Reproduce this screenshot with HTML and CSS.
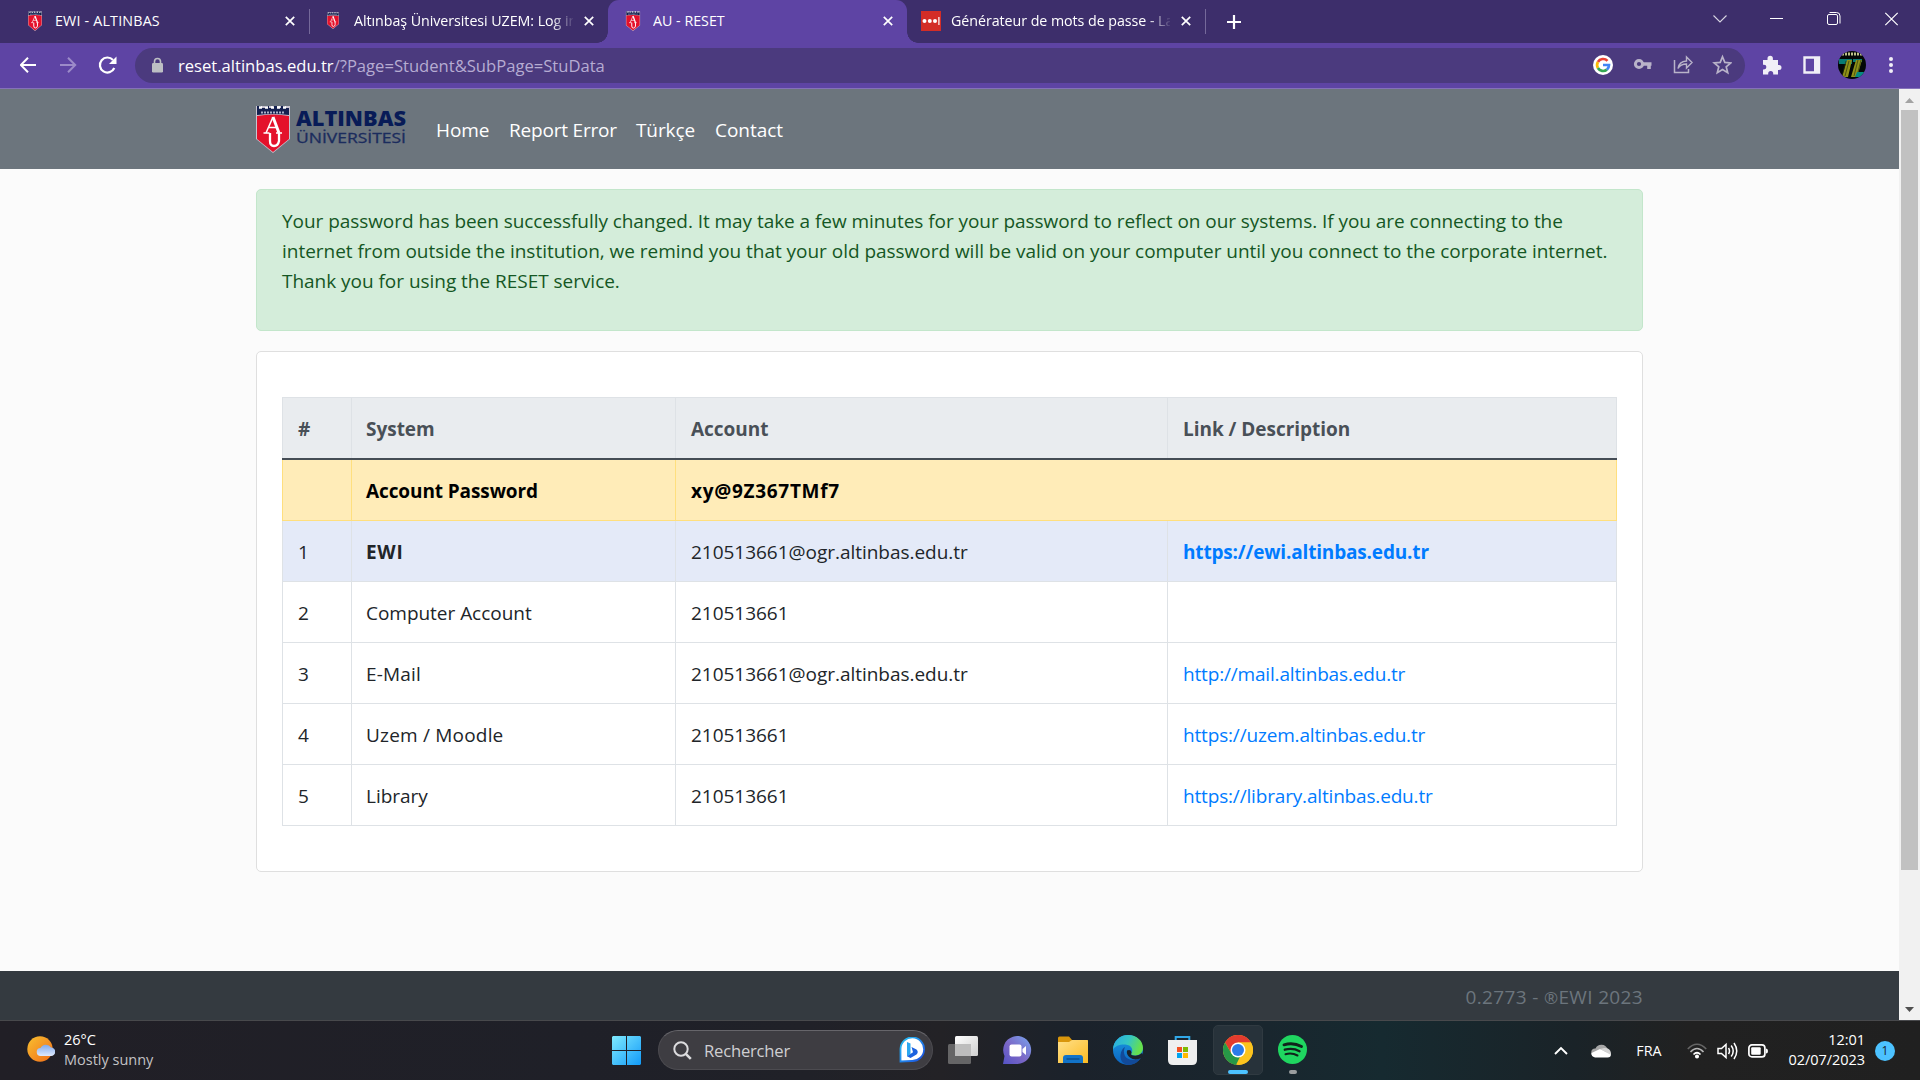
FILE: index.html
```html
<!DOCTYPE html>
<html lang="en">
<head>
<meta charset="utf-8">
<title>AU - RESET</title>
<link rel="stylesheet" href="styles.css">
</head>
<body>
<svg class="defs" width="0" height="0">
  <defs>
    <symbol id="shield" viewBox="0 0 34 48">
      <path d="M0 1h34v33L17 48 0 34z" fill="#c9c4d0"/>
      <path d="M1 11q16-3 32 0v23L17 47 1 34z" fill="#e4112b"/>
      <path d="M1 1h4v2h4V1h4v2h4V1h4v2h4V1h4v2h4V10q-16-2-32 0z" fill="#14204f"/>
      <path d="M3 2.500h3m3 0h3m3 0h3m3 0h3m3 0h3" stroke="#fff" stroke-width="2.500"/>
      <path d="M5 7.500h24" stroke="#aab0c8" stroke-width="2" stroke-dasharray="2 1"/>
      <g stroke="#fff" fill="none"><path d="M10 28l7-16" stroke-width="1.500"/><path d="M17 12l6 16" stroke-width="3"/><path d="M12.500 22.500h8M7.500 28h6m6.500 0h6" stroke-width="1.500"/><path d="M14 28v8q0 5 4 5t5-5v-8" stroke-width="2.300"/></g>
    </symbol>
    <symbol id="close" viewBox="0 0 10 10"><path d="M.8.8l8.400 8.400M9.200.8L.8 9.200" stroke="#fff" stroke-width="1.700"/></symbol>
    <linearGradient id="gWin" x1="0" y1="0" x2="1" y2="1"><stop offset="0" stop-color="#7feafe"/><stop offset="1" stop-color="#129af8"/></linearGradient>
    <linearGradient id="gSun" x1="0" y1="0" x2="1" y2="1"><stop offset="0" stop-color="#f8c030"/><stop offset="1" stop-color="#f06c18"/></linearGradient>
    <linearGradient id="gCloud" x1="0" y1="0" x2="0" y2="1"><stop offset="0" stop-color="#7fa9ec"/><stop offset="1" stop-color="#dfe9fc"/></linearGradient>
    <linearGradient id="gChat" x1="0" y1="1" x2="1" y2="0"><stop offset="0" stop-color="#5453c6"/><stop offset=".45" stop-color="#7b67c6"/><stop offset="1" stop-color="#78a6ef"/></linearGradient>
    <linearGradient id="gFold" x1="0" y1="0" x2="1" y2="1"><stop offset="0" stop-color="#ffe08a"/><stop offset="1" stop-color="#fcbb22"/></linearGradient>
    <linearGradient id="gEdgeA" x1="0" y1="0" x2="1" y2=".3"><stop offset="0" stop-color="#27a9e6"/><stop offset=".55" stop-color="#35c6c3"/><stop offset="1" stop-color="#66e04c"/></linearGradient>
    <linearGradient id="gEdgeB" x1="0" y1="0" x2="0" y2="1"><stop offset="0" stop-color="#1a9be2"/><stop offset="1" stop-color="#0b63c0"/></linearGradient>
    <linearGradient id="gBing" x1="0" y1="0" x2="1" y2="1"><stop offset="0" stop-color="#27c4f3"/><stop offset="1" stop-color="#1b4ae0"/></linearGradient>
    <linearGradient id="gTask" x1="0" y1="0" x2="1" y2="1"><stop offset="0" stop-color="#fff"/><stop offset="1" stop-color="#cfcfcf"/></linearGradient>
  </defs>
</svg>

<div class="screen">
  <header class="tabstrip">
    <div class="tab tab-1">
      <svg class="fav" width="14" height="20"><use href="#shield"/></svg>
      <span class="title t-ewi">EWI - ALTINBAS</span>
      <svg class="x" width="10" height="10"><use href="#close"/></svg>
    </div>
    <i class="tab-line"></i>
    <div class="tab tab-2">
      <svg class="fav" width="12" height="17"><use href="#shield"/></svg>
      <span class="title fade">Altınbaş Üniversitesi UZEM: Log in</span>
      <svg class="x" width="10" height="10"><use href="#close"/></svg>
    </div>
    <div class="tab tab-3">
      <svg class="fav" width="16" height="20"><use href="#shield"/></svg>
      <span class="title">AU - RESET</span>
      <svg class="x" width="10" height="10"><use href="#close"/></svg>
    </div>
    <div class="tab tab-4">
      <svg class="fav" width="20" height="20"><path fill="#d32d27" d="M0 0h20v20H0z"/><g fill="#fff"><circle cx="3.500" cy="10" r="2"/><circle cx="8.800" cy="10" r="2"/><circle cx="14" cy="10" r="2"/><path d="M17.300 6h1.200v8h-1.200z"/></g></svg>
      <span class="title fade">Générateur de mots de passe - La</span>
      <svg class="x" width="10" height="10"><use href="#close"/></svg>
    </div>
    <i class="tab-line"></i>
    <svg class="plus" width="14" height="14"><path d="M7 0v14M0 7h14" stroke="#fff" stroke-width="2.200"/></svg>
    <svg class="wincontrols" width="186" height="14" fill="none" stroke="#fff">
      <path d="M.5 3.500L7 10l6.500-6.500" stroke="#d8d5e2" stroke-width="1.100"/><path d="M57 6.500h13"/>
      <rect x="114.500" y="2.500" width="10" height="10" rx="1.500"/><path d="M116.500.500h7q3.500 0 3.500 3.500v7.500"/>
      <path d="M172.300.800l12.400 12.400M184.700.800L172.300 13.200" stroke-width="1.200"/>
    </svg>
  </header>

  <div class="toolbar">
    <svg class="nav-icons" width="98" height="20" fill="none" stroke="#fff" stroke-width="2">
      <path d="M16 10H1M8 2.800L.8 10 8 17.200"/>
      <path d="M40 10h15M48 2.800l7.200 7.200-7.200 7.200" stroke="#9c8bc9"/>
      <path d="M94.300 13A7.500 7.500 0 1 1 93 5" stroke-width="2.200"/><path d="M96.500 1.500V9H89z" fill="#fff" stroke="none"/>
    </svg>
    <div class="omnibox">
      <svg width="11" height="16"><path d="M2.500 7V4.500a3 3 0 0 1 6 0V7" fill="none" stroke="#bdbfc4" stroke-width="1.600"/><rect y="6" width="11" height="9.500" rx="1.200" fill="#bdbfc4"/></svg>
      <span class="url">reset.altinbas.edu.tr<span class="path">/?Page=Student&amp;SubPage=StuData</span></span>
      <svg class="omni-icons" width="140" height="22">
        <circle cx="11" cy="11" r="10" fill="#fff"/>
        <g fill="none" stroke-width="2.700"><path d="M15.500 6.900A6 6 0 0 0 5.900 8" stroke="#ea4335"/><path d="M5.900 8a6 6 0 0 0 0 6" stroke="#fbbc05"/><path d="M5.900 14a6 6 0 0 0 9 1.600" stroke="#34a853"/><path d="M14.900 15.600A6 6 0 0 0 17 11h-6" stroke="#4285f4"/></g>
        <g fill="none" stroke="#b9b3c9"><circle cx="47" cy="10" r="3.600" stroke-width="3"/><path d="M50 10h9.500M57 10v5" stroke-width="3.600"/>
          <path d="M82.500 6v12.500h14V15" stroke-width="1.500"/><path d="M86 14.500q1-7 8.500-7.500V3l5.500 5.500-5.500 5.500v-4q-6 0-8.500 4.500z" stroke-width="1.400"/>
          <path d="M130.500 2.800l2.300 5.600 6 .5-4.600 3.900 1.500 5.900-5.200-3.200-5.200 3.200 1.500-5.900-4.600-3.900 6-.5z" stroke-width="1.700"/></g>
      </svg>
    </div>
    <svg class="ext-icons" width="136" height="30">
      <path d="M0 11.500h4.500V10a2.700 2.700 0 0 1 5.400 0v1.500H15v5h1a2.500 2.500 0 0 1 0 5h-1V26h-4.800v-1a2.500 2.500 0 0 0-5 0v1H0v-5h1a2.400 2.400 0 0 0 0-4.800H0z" fill="#f1eff7" transform="translate(0 -1.500)"/>
      <path d="M41.500 7.500h14.500v15H41.500z" fill="none" stroke="#f1eff7" stroke-width="2.400"/><path d="M51 7h6v16h-6z" fill="#f1eff7"/>
      <clipPath id="ava"><circle cx="89" cy="15" r="14"/></clipPath>
      <g clip-path="url(#ava)"><path d="M74 0h30v30H74z" fill="#030806"/><path d="M79 4h20" stroke="#bdc18a" stroke-width="3" stroke-dasharray="2 1"/><path d="M76 9h13v5H76zM90 9h9v3h-9z" fill="#087c74"/><path d="M84 10h5l-4 17h-6zM93 10h6l-5 17h-6z" fill="#8f9118"/><path d="M83 11l-4 15M86 11l-4 15M95 10l-4 16M98 10l-4 16" stroke="#222b0b" stroke-width=".6"/><path d="M94 22h10l-2 5H92z" fill="#078a80"/></g>
      <g fill="#f1eff7"><circle cx="128" cy="9" r="2"/><circle cx="128" cy="15" r="2"/><circle cx="128" cy="21" r="2"/></g>
    </svg>
  </div>

  <div class="viewport">
    <main class="page">
      <nav class="navbar">
        <div class="container nav-row">
          <svg class="brand" width="152" height="48">
            <use href="#shield" width="34" height="48"/>
            <text class="b1" x="40" y="21" textLength="110" lengthAdjust="spacingAndGlyphs">ALTINBAS</text>
            <text class="b2" x="40" y="37.500" textLength="110" lengthAdjust="spacingAndGlyphs">ÜNİVERSİTESİ</text>
          </svg>
          <a class="n1">Home</a><a class="n2">Report Error</a><a class="n3">Türkçe</a><a class="n4">Contact</a>
        </div>
      </nav>
      <div class="container">
        <div class="alert"><span class="first">Your password has been successfully changed. It may take a few minutes for your password to reflect on our systems. If you are connecting to the</span><br>internet from outside the institution, we remind you that your old password will be valid on your computer until you connect to the corporate internet.<br>Thank you for using the RESET service.</div>
        <div class="card">
          <table>
            <colgroup><col class="c1"><col class="c2"><col class="c3"><col></colgroup>
            <thead><tr><th>#</th><th>System</th><th>Account</th><th>Link / Description</th></tr></thead>
            <tbody>
              <tr class="warn"><td></td><td>Account Password</td><td colspan="2" class="pw">xy@9Z367TMf7</td></tr>
              <tr class="info"><td>1</td><td><b class="ewi">EWI</b></td><td>210513661@ogr.altinbas.edu.tr</td><td><a><b>https://ewi.altinbas.edu.tr</b></a></td></tr>
              <tr><td>2</td><td>Computer Account</td><td>210513661</td><td></td></tr>
              <tr><td>3</td><td class="wide">E-Mail</td><td>210513661@ogr.altinbas.edu.tr</td><td><a>http://mail.altinbas.edu.tr</a></td></tr>
              <tr><td>4</td><td class="wide">Uzem / Moodle</td><td>210513661</td><td><a>https://uzem.altinbas.edu.tr</a></td></tr>
              <tr><td>5</td><td>Library</td><td>210513661</td><td><a>https://library.altinbas.edu.tr</a></td></tr>
            </tbody>
          </table>
        </div>
      </div>
      <footer class="footer"><div class="container">0.2773 - <span class="reg">®</span>EWI 2023</div></footer>
    </main>
    <div class="scrollbar">
      <svg width="9" height="5"><path d="M0 5L4.500 0 9 5z" fill="#a3a3a3"/></svg>
      <i class="thumb"></i>
      <svg width="9" height="5"><path d="M0 0l4.500 5L9 0z" fill="#505050"/></svg>
    </div>
  </div>

  <footer class="taskbar">
    <div class="weather">
      <svg width="28" height="26"><circle cx="13" cy="13" r="12.700" fill="url(#gSun)"/><path d="M14 20.500a4 4 0 0 1-.5-8 6 6 0 0 1 10.500-.500 4.200 4.200 0 0 1 0 8.500z" transform="translate(0 -.5)" fill="url(#gCloud)"/></svg>
      <div class="w-text"><span>26°C</span><span class="dim">Mostly sunny</span></div>
    </div>
    <div class="apps">
      <svg class="win" width="29" height="29"><path d="M1 0h13v14H0V1zM15 0h13l1 1v13H15zM0 15h14v14H1l-1-1zM15 15h14v13l-1 1H15z" fill="url(#gWin)"/></svg>
      <div class="search">
        <svg width="19" height="19" fill="none" stroke="#dcdcde"><circle cx="8" cy="8" r="6.700" stroke-width="2"/><path d="M12.800 12.800l5 5" stroke-width="2.600"/></svg>
        <span>Rechercher</span>
        <svg width="26" height="26"><path d="M1.500 24.500V12A11.800 11.800 0 1 1 13 24z" fill="#fff" stroke="url(#gBing)" stroke-width="1.800"/><path d="M8 5l3.500 1.500V17L8 19.500z" fill="#2aa7f0"/><path d="M12.500 10l5 2.500q2.500 2.500 0 5L11.500 21 8 19.200l6-3.900z" fill="#1c62df"/></svg>
      </div>
      <svg class="app a-task" width="30" height="28"><rect x="7" width="23" height="20" rx="1.500" fill="url(#gTask)"/><rect y="8" width="23" height="20" rx="1.500" fill="#777" opacity=".8"/><rect x="7" y="8" width="16" height="12" fill="#bdbdbd"/></svg>
      <svg class="app a-chat" width="29" height="29"><path d="M0 28l1.500-8A14 14 0 1 1 14.500 28z" fill="url(#gChat)"/><rect x="6.500" y="8.500" width="12" height="12" rx="2" fill="#fff"/><path d="M19.500 13l3.500-3v9l-3.500-3z" fill="#fff"/></svg>
      <svg class="app a-fold" width="30" height="28"><path d="M0 7V2q0-1.500 1.500-1.500H11L14 4h15q1 0 1 1v8H0z" fill="#d9960c"/><path d="M0 6h11l3-2h15q1 0 1 1v22H0z" fill="url(#gFold)"/><path d="M5 27v-5q0-3 3-3h14q3 0 3 3v5z" fill="#1273c8"/><path d="M8.500 23h13" stroke="#0b4f91" stroke-width="1.500"/></svg>
      <svg class="app a-edge" width="30" height="30"><circle cx="15" cy="15" r="15" fill="url(#gEdgeB)"/><path d="M0 15C0 6 7 0 15 0c9 0 15 6 15 13 0 5-4 7.500-8 7.500-3 0-4.500-1-3.500-2.500 2-3 0-8-6-8.500C7 9.200 1.500 11 0 15z" fill="url(#gEdgeA)"/><path d="M12 12c-3 6 0 14 10 13 3-.3 5-1.800 6-2.500-3 5-8 7.500-13 7.500C9 29 7 24 7.500 20 8 15.500 10 13 12 12z" fill="#124a99"/><path d="M18.500 18q-1.500 2 2 2.500 5 .7 8.500-2.500l1 2-1.500 3q-7 3-11.500-.500-4-3-3-7 4-1.500 4.500 2z" fill="#1b222a"/></svg>
      <svg class="app a-store" width="29" height="29"><path d="M7.700 6V1h13.600v5" fill="none" stroke="#31a8e8" stroke-width="2"/><path d="M0 4h29v20q0 5-5 5H5q-5 0-5-5z" fill="#efefef"/><path d="M9 11h5v5H9z" fill="#f25022"/><path d="M15 11h5v5h-5z" fill="#7fba00"/><path d="M9 17h5v5H9z" fill="#00a4ef"/><path d="M15 17h5v5h-5z" fill="#ffb900"/></svg>
      <div class="app a-chrome">
        <svg width="30" height="30"><circle cx="15" cy="15" r="15" fill="#fcc31e"/><path d="M2 7.500A15 15 0 0 1 28 7.500H15l-6.500 11z" fill="#e33b2e"/><path d="M2 7.500l6.500 11.200 8.500 3-4 8.200A15 15 0 0 1 2 7.500z" fill="#279847"/><path d="M15 7.500h13a15 15 0 0 1-13 22.500l6.500-11.300z" fill="#fcc31e"/><circle cx="15" cy="15" r="7.500" fill="#fff"/><circle cx="15" cy="15" r="6" fill="#2c7bea"/></svg>
        <i class="run"></i>
      </div>
      <div class="app a-spot">
        <svg width="29" height="29"><circle cx="14.500" cy="14.500" r="14.500" fill="#1fd660"/><g fill="none" stroke="#10231b" stroke-linecap="round"><path d="M6 9.800q9.500-2.600 17.500 1.700" stroke-width="2.900"/><path d="M6.800 14.700q8-2.200 14.700 1.500" stroke-width="2.400"/><path d="M7.500 19.200q6.500-1.700 12 1.300" stroke-width="2"/></g></svg>
        <i class="run idle"></i>
      </div>
    </div>
    <div class="tray">
      <svg class="t-chev" width="14" height="9"><path d="M1 8l6-6 6 6" fill="none" stroke="#fff" stroke-width="1.900"/></svg>
      <svg class="t-cloud" width="20" height="14"><path d="M4 12.500a4 4 0 0 1 .5-8A6.500 6.500 0 0 1 16.500 5z" fill="#a7a7a7"/><path d="M4 13.500q-4-1-3.500-4.500L9 5l11 5q0 3.500-3.500 3.500z" fill="#fff"/><path d="M9 5l4-1q6-.5 7 5v2z" fill="#d3d3d3"/></svg>
      <span class="t-fra">FRA</span>
      <svg class="t-wifi" width="20" height="16" fill="none" stroke="#fff" stroke-width="1.700"><path d="M.8 6q9.200-9.500 18.400 0" stroke="#666"/><path d="M3.500 9q6.500-7 13 0" stroke="#b5b5b5"/><path d="M6.500 11.500q3.500-3.500 7 0"/><circle cx="10" cy="13.500" r="1.200" fill="#fff"/></svg>
      <svg class="t-vol" width="21" height="18" fill="none" stroke="#fff" stroke-width="1.500"><path d="M1 6.500h3.500L9 2.500v13l-4.500-4H1z"/><path d="M11.500 6q2 3 0 6M14.200 3.500q4 5.500 0 11M17 1q5.500 8 0 16"/></svg>
      <svg class="t-bat" width="21" height="14"><rect x=".9" y=".9" width="16" height="12" rx="3" fill="none" stroke="#fff" stroke-width="1.700"/><rect x="3.200" y="3.200" width="9.500" height="7.500" rx="1" fill="#fff"/><path d="M18 4.500q2 0 2 2.500t-2 2.500z" fill="#fff"/></svg>
      <div class="clock"><span>12:01</span><span>02/07/2023</span></div>
      <span class="badge">1</span>
    </div>
  </footer>
</div>
</body>
</html>
```
FILE: styles.css
```css
* { box-sizing: border-box; }
body { margin: 0; width: 1920px; height: 1080px; overflow: hidden; font-family: "Open Sans", "Noto Sans", sans-serif; }
svg { flex: none; display: block; }
.defs { position: absolute; }
.screen { display: flex; flex-direction: column; width: 1920px; height: 1080px; }

/* Browser tabs */
.tabstrip { display: flex; align-items: center; height: 43px; flex: none; background: #3d2e6b; color: #fff; }
.tab { display: flex; align-items: center; height: 43px; font-size: 14.25px; white-space: nowrap; padding-bottom: 2px; }
.title { flex: 1; overflow: hidden; line-height: 24px; }
.t-ewi { letter-spacing: .2px; }
.tab-1 { width: 309px; padding-left: 28px; padding-right: 14px; }
.tab-1 .fav { margin-right: 13px; }
.tab-2 { width: 298px; padding-left: 17px; padding-right: 14px; }
.tab-2 .fav { margin-right: 15px; }
.tab-2 .title { margin-right: 11px; letter-spacing: -.05px; }
.tab-4 .title { margin-right: 11px; letter-spacing: -.05px; }
.tab-3 { width: 299px; padding-left: 17px; padding-right: 14px; background: #5e44a4; border-radius: 11px 11px 0 0; position: relative; }
.tab-3 .fav { margin-right: 12px; }
.tab-3::before, .tab-3::after { content: ""; position: absolute; bottom: 0; width: 11px; height: 11px; }
.tab-3::before { left: -11px; background: radial-gradient(circle at 0 0, transparent 10.500px, #5e44a4 11px); }
.tab-3::after { right: -11px; background: radial-gradient(circle at 100% 0, transparent 10.500px, #5e44a4 11px); }
.tab-4 { width: 298px; padding-left: 14px; padding-right: 14px; }
.tab-4 .fav { margin-right: 10px; }
.fade { -webkit-mask-image: linear-gradient(90deg, #000 90%, transparent 101%); mask-image: linear-gradient(90deg, #000 90%, transparent 101%); }
.tab-line { width: 1px; height: 25px; background: #75699a; }
.plus { margin-left: 21px; }
.wincontrols { margin-left: auto; margin-right: 21px; margin-bottom: 6px; }

/* Address bar */
.toolbar { display: flex; align-items: center; flex: none; height: 46px; padding: 0 17px 1px 20px; background: #5e44a4; border-bottom: 1px solid #8572b9; }
.omnibox { display: flex; align-items: center; width: 1610px; height: 35px; margin-left: 17px; padding: 0 13px 0 17px; border-radius: 18px; background: #4b3a7e; }
.url { margin-left: 15px; padding-top: 2px; font-size: 16.6px; color: #fff; line-height: 26px; }
.path { color: #b6acd2; }
.omni-icons { margin-left: auto; }
.ext-icons { margin-left: 18px; margin-right: 1px; }

/* Web page */
.viewport { display: flex; flex: none; height: 931px; background: #fbfbfb; }
.page { display: flex; flex-direction: column; width: 1899px; font-size: 19px; line-height: 30px; color: #212529; letter-spacing: -.03px; }
.container { width: 1387px; margin: 0 auto; }
.navbar { height: 80px; background: #6c757d; margin-bottom: 20px; }
.nav-row { display: flex; height: 80px; color: #fff; white-space: nowrap; }
.nav-row a { padding: 26px 0 0; }
.brand { margin: 16px 28px 0 0; }
.b1 { font: 800 21px "Open Sans", sans-serif; fill: #081b57; letter-spacing: 0; }
.b2 { font: 400 14px "Open Sans", sans-serif; fill: #1b2c5d; stroke: #1b2c5d; stroke-width: .3px; letter-spacing: 0; }
.nav-row .n1 { width: 73px; letter-spacing: -.1px; }
.nav-row .n2 { width: 127px; letter-spacing: -.2px; }
.nav-row .n3 { width: 79px; letter-spacing: -.1px; }
.alert { height: 142px; margin-bottom: 20px; padding: 16px 25px; border: 1px solid #c3e6cb; border-radius: 5px; background: #d4edda; color: #155724; white-space: nowrap; }
.first { letter-spacing: -.055px; }
.card { height: 521px; padding: 45px 25px 0; border: 1px solid #dfdfdf; border-radius: 5px; background: #fff; }
table { width: 1335px; border-collapse: collapse; table-layout: fixed; }
.c1 { width: 69px; }
.c2 { width: 324px; }
.c3 { width: 492px; }
th, td { height: 61px; padding: 2px 15px 0; text-align: left; border: 1px solid #dee2e6; line-height: 30px; }
th:nth-child(2), td:nth-child(2) { padding-left: 14px; }
.warn td { height: 62px; }
th { background: #e9ecef; color: #495057; font-weight: 700; border-bottom: 2px solid #454d55; }
b, .warn td { font-weight: 700; }
td b { letter-spacing: -.17px; }
td .ewi { letter-spacing: .7px; }
td.wide { letter-spacing: .2px; }
.warn td { background: #ffecb8; border-color: #ffdf7e; border-top-color: #454d55; color: #000; letter-spacing: -.1px; }
.warn .pw { letter-spacing: .7px; }
.info td { background: #e4eaf8; border-top-color: #ffdf7e; }
td a { color: #007bff; letter-spacing: -.17px; }
.footer { margin-top: auto; height: 49px; background: #343a40; color: #6c757d; text-align: right; padding-top: 11px; letter-spacing: .35px; }
.reg { font-size: 17px; }
.scrollbar { display: flex; flex-direction: column; align-items: center; width: 21px; padding: 9px 0 8px; background: #f1f1f1; }
.thumb { width: 17px; height: 760px; margin-top: 7px; background: #c1c1c1; }
.scrollbar svg:last-child { margin-top: auto; }

/* Taskbar */
.taskbar { display: flex; align-items: center; height: 60px; border-top: 1px solid #48494c; color: #fff; font-size: 14.500px; background: linear-gradient(90deg, #211f26 0, #1f2028 30%, #202128 42%, #232226 49%, #1b222b 56%, #19262e 66%, #162a30 72%, #1a2328 82%, #212121 88%, #202020 100%); }
.weather { display: flex; align-items: center; width: 612px; padding-left: 27px; }
.weather svg { margin-bottom: 4px; }
.w-text { display: flex; flex-direction: column; margin-left: 9px; margin-bottom: 2px; line-height: 20px; }
.dim { color: #c3c2c5; }
.apps { display: flex; align-items: center; margin-bottom: 1px; }
.search { display: flex; align-items: center; width: 275px; height: 40px; margin-left: 17px; padding: 0 7px 0 14px; border: 1px solid #4c4b50; border-top-color: #66656a; border-radius: 20px; background: #3e3d42; font-size: 16.600px; color: #cfcfd2; }
.search span { margin: 1px auto 0 12px; letter-spacing: -.2px; }
.a-task { margin-left: 15px; }
.a-chat { margin-left: 25px; }
.a-fold { margin-left: 26px; }
.a-edge { margin-left: 25px; }
.a-store { margin-left: 25px; }
.a-chrome { display: flex; flex-direction: column; align-items: center; width: 50px; height: 50px; margin-left: 16px; padding-top: 9px; border: 1px solid #303a41; border-radius: 5px; background: #27323a; }
.run { width: 20px; height: 4px; margin-top: 5px; border-radius: 2px; background: #4cc2ff; }
.a-spot { display: flex; flex-direction: column; align-items: center; height: 50px; margin-left: 15px; padding-top: 10px; }
.idle { width: 8px; margin-top: 6px; background: #9a9d9f; }
.tray { display: flex; align-items: center; margin-left: auto; margin-right: 25px; }
.t-cloud { margin-left: 23px; }
.t-fra { margin-left: 25px; font-size: 14.250px; }
.t-wifi { margin-left: 25px; }
.t-vol { margin-left: 10px; }
.t-bat { margin-left: 10px; }
.clock { display: flex; flex-direction: column; text-align: right; margin-left: 20px; margin-bottom: 2px; line-height: 20px; letter-spacing: -.05px; }
.badge { width: 20px; height: 20px; margin-left: 10px; border-radius: 50%; background: #4cc2ff; color: #17262e; font-size: 12px; line-height: 20px; text-align: center; }
```
